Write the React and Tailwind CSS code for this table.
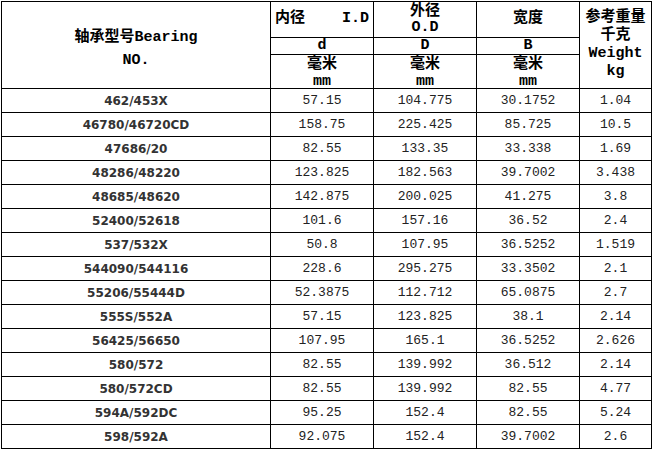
import React from "react";

const rows = [
  ["462/453X", "57.15", "104.775", "30.1752", "1.04"],
  ["46780/46720CD", "158.75", "225.425", "85.725", "10.5"],
  ["47686/20", "82.55", "133.35", "33.338", "1.69"],
  ["48286/48220", "123.825", "182.563", "39.7002", "3.438"],
  ["48685/48620", "142.875", "200.025", "41.275", "3.8"],
  ["52400/52618", "101.6", "157.16", "36.52", "2.4"],
  ["537/532X", "50.8", "107.95", "36.5252", "1.519"],
  ["544090/544116", "228.6", "295.275", "33.3502", "2.1"],
  ["55206/55444D", "52.3875", "112.712", "65.0875", "2.7"],
  ["555S/552A", "57.15", "123.825", "38.1", "2.14"],
  ["56425/56650", "107.95", "165.1", "36.5252", "2.626"],
  ["580/572", "82.55", "139.992", "36.512", "2.14"],
  ["580/572CD", "82.55", "139.992", "82.55", "4.77"],
  ["594A/592DC", "95.25", "152.4", "82.55", "5.24"],
  ["598/592A", "92.075", "152.4", "39.7002", "2.6"],
];

const head =
  "font-['Liberation_Mono','Noto_Sans_CJK_SC',monospace] font-bold text-[15px] text-black";
const cell = "border-r border-b border-black flex items-center justify-center";

export default function App() {
  return (
    <div className="w-[653px] h-[450px] bg-white overflow-hidden">
      <div className="ml-px mt-px w-[651px] border-l border-t border-black grid grid-cols-[269px_103px_103px_103px_72px] grid-rows-[36px_17px_34px] auto-rows-[24px]">
        <div className={`${cell} row-span-3 flex-col leading-[23px] pt-[8px] ${head}`}>
          <span>轴承型号Bearing</span>
          <span>NO.</span>
        </div>
        <div className={`border-r border-b border-black flex items-center justify-between px-[4px] ${head}`}>
          <span>内径</span>
          <span>I.D</span>
        </div>
        <div className={`${cell} flex-col leading-[16px] ${head}`}>
          <span>外径</span>
          <span>O.D</span>
        </div>
        <div className={`${cell} ${head}`}>宽度</div>
        <div className={`${cell} row-span-3 flex-col leading-[18px] ${head}`}>
          <span>参考重量</span>
          <span>千克</span>
          <span>Weight</span>
          <span>kg</span>
        </div>
        <div className={`${cell} leading-[16px] ${head}`}>d</div>
        <div className={`${cell} leading-[16px] ${head}`}>D</div>
        <div className={`${cell} leading-[16px] ${head}`}>B</div>
        {[0, 1, 2].map((i) => (
          <div
            key={i}
            className={`border-r border-b border-black flex flex-col items-center justify-start overflow-hidden pt-[1px] leading-[17px] ${head}`}
          >
            <span>毫米</span>
            <span>mm</span>
          </div>
        ))}
        {rows.map((r, ri) => (
          <React.Fragment key={ri}>
            <div className={`${cell} font-['DejaVu_Sans',sans-serif] font-bold text-[12px] text-[#333]`}>
              {r[0]}
            </div>
            {r.slice(1).map((v, ci) => (
              <div
                key={ci}
                className={`${cell} font-['Liberation_Mono',monospace] text-[13px] text-[#222]`}
              >
                {v}
              </div>
            ))}
          </React.Fragment>
        ))}
      </div>
    </div>
  );
}
